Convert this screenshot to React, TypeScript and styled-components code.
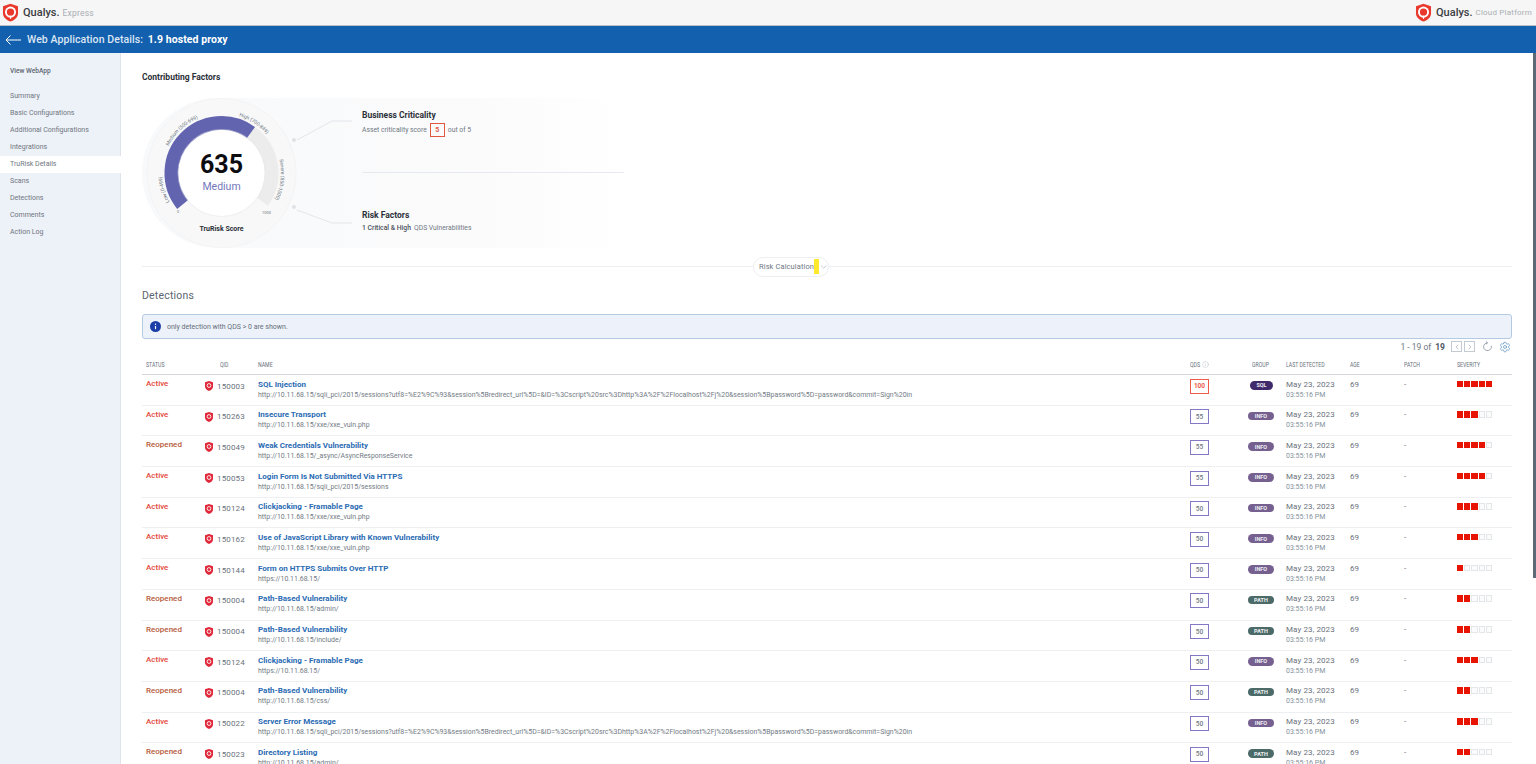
import styled, { createGlobalStyle } from "styled-components";
import { ChevronDown, ChevronLeft, ChevronRight, Info, Settings } from "lucide-react";

const LONG_URL =
  "http://10.11.68.15/sqli_pci/2015/sessions?utf8=%E2%9C%93&session%5Bredirect_url%5D=&ID=%3Cscript%20src%3Dhttp%3A%2F%2Flocalhost%2Fj%20&session%5Bpassword%5D=password&commit=Sign%20in";

type Group = "SQL" | "INFO" | "PATH";

interface Detection {
  status: "Active" | "Reopened";
  qid: number;
  name: string;
  url: string;
  qds: number;
  group: Group;
  severity: number;
}

const detections: Detection[] = [
  { status: "Active", qid: 150003, name: "SQL Injection", url: LONG_URL, qds: 100, group: "SQL", severity: 5 },
  { status: "Active", qid: 150263, name: "Insecure Transport", url: "http://10.11.68.15/xxe/xxe_vuln.php", qds: 55, group: "INFO", severity: 3 },
  { status: "Reopened", qid: 150049, name: "Weak Credentials Vulnerability", url: "http://10.11.68.15/_async/AsyncResponseService", qds: 55, group: "INFO", severity: 4 },
  { status: "Active", qid: 150053, name: "Login Form Is Not Submitted Via HTTPS", url: "http://10.11.68.15/sqli_pci/2015/sessions", qds: 55, group: "INFO", severity: 4 },
  { status: "Active", qid: 150124, name: "Clickjacking - Framable Page", url: "http://10.11.68.15/xxe/xxe_vuln.php", qds: 50, group: "INFO", severity: 3 },
  { status: "Active", qid: 150162, name: "Use of JavaScript Library with Known Vulnerability", url: "http://10.11.68.15/xxe/xxe_vuln.php", qds: 50, group: "INFO", severity: 3 },
  { status: "Active", qid: 150144, name: "Form on HTTPS Submits Over HTTP", url: "https://10.11.68.15/", qds: 50, group: "INFO", severity: 1 },
  { status: "Reopened", qid: 150004, name: "Path-Based Vulnerability", url: "http://10.11.68.15/admin/", qds: 50, group: "PATH", severity: 2 },
  { status: "Reopened", qid: 150004, name: "Path-Based Vulnerability", url: "http://10.11.68.15/include/", qds: 50, group: "PATH", severity: 2 },
  { status: "Active", qid: 150124, name: "Clickjacking - Framable Page", url: "https://10.11.68.15/", qds: 50, group: "INFO", severity: 3 },
  { status: "Reopened", qid: 150004, name: "Path-Based Vulnerability", url: "http://10.11.68.15/css/", qds: 50, group: "PATH", severity: 2 },
  { status: "Active", qid: 150022, name: "Server Error Message", url: LONG_URL, qds: 50, group: "INFO", severity: 3 },
  { status: "Reopened", qid: 150023, name: "Directory Listing", url: "http://10.11.68.15/admin/", qds: 50, group: "PATH", severity: 2 },
];

const navItems = [
  "Summary",
  "Basic Configurations",
  "Additional Configurations",
  "Integrations",
  "TruRisk Details",
  "Scans",
  "Detections",
  "Comments",
  "Action Log",
];

const headers = [
  { label: "STATUS", indent: 4 },
  { label: "QID", indent: 20 },
  { label: "NAME", indent: 0 },
  { label: "QDS", indent: 0 },
  { label: "GROUP", indent: 12 },
  { label: "LAST DETECTED", indent: 0 },
  { label: "AGE", indent: 0 },
  { label: "PATCH", indent: 0 },
  { label: "SEVERITY", indent: 0 },
];

const groupColors: Record<Group, string> = {
  SQL: "#3f2a6b",
  INFO: "#75608f",
  PATH: "#4b6a68",
};

const GlobalStyle = createGlobalStyle`
  html, body {
    margin: 0;
    height: 764px;
    overflow: hidden;
    background: #fff;
    font-family: Roboto, "Liberation Sans", sans-serif;
  }
`;

const Page = styled.div`
  position: relative;
  width: 1536px;
  height: 764px;
  overflow: hidden;
  display: flex;
  flex-direction: column;
`;

const TopBar = styled.header`
  height: 25px;
  flex: none;
  display: flex;
  align-items: center;
  justify-content: space-between;
  padding: 0 4px 0 1px;
  background: #f6f6f6;
  border-bottom: 1px solid #b9bfc5;
`;

const Brand = styled.div`
  display: flex;
  align-items: center;
  gap: 3px;
`;

const BrandName = styled.span`
  font-size: 11px;
  font-weight: 500;
  color: #3a3d42;
`;

const BrandSuffix = styled.span<{ $wide?: boolean }>`
  font-size: ${({ $wide }) => ($wide ? "8px" : "8.5px")};
  color: #a9aeb4;
  letter-spacing: 0.2px;
`;

const TitleBar = styled.div`
  height: 27px;
  flex: none;
  display: flex;
  align-items: center;
  gap: 6px;
  padding-left: 5px;
  background: #1360ae;
  color: #dbe7f4;
  font-size: 10.5px;
  font-weight: 500;
  letter-spacing: 0.08px;

  b {
    color: #fff;
    font-weight: 700;
    margin-left: 2px;
  }
`;

const Body = styled.div`
  flex: 1;
  display: flex;
  min-height: 0;
`;

const Sidebar = styled.nav`
  width: 120px;
  flex: none;
  background: #edf1f8;
  border-right: 1px solid #dfe4ec;
  padding-top: 13px;
`;

const SideTitle = styled.div`
  font-size: 6.6px;
  font-weight: 500;
  color: #5b6470;
  padding-left: 10px;
  margin-bottom: 11.5px;
  line-height: 10px;
`;

const SideItem = styled.div<{ $active?: boolean }>`
  height: 17px;
  line-height: 17px;
  padding-left: 10px;
  font-size: 7px;
  color: #707780;
  background: ${({ $active }) => ($active ? "#fff" : "transparent")};
  margin-right: ${({ $active }) => ($active ? "-1px" : "0")};
  position: relative;
`;

const Main = styled.main`
  flex: 1;
  min-width: 0;
  padding: 18px 24px 0 21px;
`;

const SectionTitle = styled.h2`
  margin: 0 0 15px;
  font-size: 8.5px;
  line-height: 12px;
  font-weight: 700;
  color: #2b3038;
`;

const FactorPanel = styled.section`
  display: flex;
  width: 482px;
  height: 150px;
  border-radius: 75px 0 0 75px;
  background: linear-gradient(90deg, #f8f9fa 0%, #fbfbfc 70%, #ffffff 100%);
`;

const Gauge = styled.svg`
  width: 220px;
  height: 150px;
  flex: none;
`;

const FactorColumn = styled.div`
  flex: 1;
  display: flex;
  flex-direction: column;
  padding-top: 12px;
`;

const FactorBlock = styled.div`
  height: 62px;
`;

const FactorDivider = styled.div`
  height: 1px;
  background: #e6e9ed;
  margin-bottom: 37px;
`;

const FactorTitle = styled.div`
  font-size: 8.5px;
  line-height: 10px;
  font-weight: 700;
  color: #2b3038;
  margin-bottom: 3px;
`;

const FactorText = styled.div`
  display: flex;
  align-items: center;
  gap: 2px;
  font-size: 6.8px;
  line-height: 11px;
  color: #6f7883;

  b {
    font-weight: 500;
    color: #4a515b;
    margin-right: 1px;
  }
`;

const ScoreBox = styled.span`
  display: inline-flex;
  align-items: center;
  justify-content: center;
  width: 15px;
  height: 14px;
  box-sizing: border-box;
  border: 1px solid #e3563f;
  font-size: 7px;
  font-weight: 700;
  color: #e3563f;
  margin: 0 1px;
`;

const CalcRow = styled.div`
  display: flex;
  align-items: center;
  margin-top: 8.5px;
  height: 20px;

  &::before,
  &::after {
    content: "";
    height: 1px;
    background: #eceef1;
  }

  &::before {
    flex: 611;
  }

  &::after {
    flex: 683;
  }
`;

const CalcPill = styled.div`
  display: flex;
  align-items: center;
  box-sizing: border-box;
  width: 76px;
  height: 20px;
  padding-left: 5px;
  border: 1px solid #eceef1;
  border-radius: 10px;
  font-size: 7.5px;
  color: #6f7883;
  letter-spacing: 0.1px;
  white-space: nowrap;

  mark {
    display: inline-block;
    flex: none;
    width: 4.5px;
    height: 15px;
    background: #ffe92e;
  }
`;

const DetectionsTitle = styled.h2`
  margin: 12.5px 0 11px;
  font-size: 10.5px;
  line-height: 14px;
  font-weight: 400;
  color: #5d6570;
  letter-spacing: 0.2px;
`;

const Notice = styled.div`
  height: 23px;
  display: flex;
  align-items: center;
  gap: 6px;
  padding-left: 7px;
  background: #edf2fa;
  border: 1px solid #b4c9e2;
  border-radius: 3px;
  font-size: 7px;
  color: #666e79;
`;

const Pager = styled.div`
  display: flex;
  align-items: center;
  justify-content: flex-end;
  gap: 1px;
  height: 15px;
  padding-right: 1px;
  font-size: 8.5px;
  color: #6f7883;

  b {
    font-weight: 700;
    margin-left: 3px;
    margin-right: 5px;
    color: #4f5862;
  }
`;

const PagerButton = styled.span`
  width: 9px;
  height: 9px;
  border: 1px solid #c3cad2;
  display: flex;
  align-items: center;
  justify-content: center;
  color: #a7afb8;
  margin-right: 1px;
`;

const PagerIcon = styled.span`
  display: flex;
  margin-left: 5px;
  color: #4f8ac0;
`;

const columns = "58px 58px 932px 50px 46px 64px 54px 53px 55px";

const HeaderRow = styled.div`
  display: grid;
  grid-template-columns: ${columns};
  height: 20px;
  align-items: center;
  border-bottom: 1px solid #d3d7dc;
`;

const HeaderCell = styled.div<{ $indent: number }>`
  display: flex;
  align-items: center;
  padding-left: ${({ $indent }) => $indent}px;
  font-size: 7.5px;
  color: #68707b;
  white-space: nowrap;

  span {
    display: inline-block;
    transform: scaleX(0.69);
    transform-origin: left center;
  }

  svg {
    margin-left: -3px;
  }
`;

const Row = styled.div`
  display: grid;
  grid-template-columns: ${columns};
  height: 30.7px;
  box-sizing: border-box;
  border-bottom: 1px solid #edeff1;
`;

const Status = styled.div<{ $reopened: boolean }>`
  padding: 3px 0 0 4px;
  font-size: 8px;
  line-height: 11px;
  font-weight: 500;
  color: ${({ $reopened }) => ($reopened ? "#b65a3a" : "#e4473a")};
`;

const QidCell = styled.div`
  display: flex;
  align-items: flex-start;
  gap: 4px;
  padding: 5.5px 0 0 5px;
  font-size: 8px;
  line-height: 11px;
  color: #6a727c;
  letter-spacing: 0.15px;

  svg {
    margin-top: 0.5px;
  }
`;

const NameCell = styled.div`
  padding-top: 3.5px;
  white-space: nowrap;
`;

const DetectionName = styled.div`
  font-size: 8px;
  line-height: 11px;
  font-weight: 700;
  color: #2b6bb3;
`;

const DetectionUrl = styled.div`
  font-size: 6.94px;
  line-height: 11px;
  color: #727a84;
`;

const QdsCell = styled.div`
  padding-top: 3.5px;
`;

const QdsBox = styled.div<{ $critical: boolean }>`
  width: 19px;
  height: 15px;
  box-sizing: border-box;
  display: flex;
  align-items: center;
  justify-content: center;
  border: 1px solid ${({ $critical }) => ($critical ? "#ee5a4a" : "#8478c4")};
  font-size: 6.5px;
  font-weight: ${({ $critical }) => ($critical ? 700 : 500)};
  color: ${({ $critical }) => ($critical ? "#ee5a4a" : "#6f7883")};
`;

const GroupCell = styled.div`
  padding: 6px 0 0 8px;
`;

const GroupBadge = styled.span<{ $group: Group }>`
  display: flex;
  align-items: center;
  justify-content: center;
  width: ${({ $group }) => ($group === "SQL" ? "23px" : "26px")};
  margin-left: ${({ $group }) => ($group === "SQL" ? "2px" : "0")};
  height: 8.5px;
  border-radius: 5px;
  background: ${({ $group }) => groupColors[$group]};
  color: #eef0f3;
  font-size: 5.5px;
  font-weight: 700;
`;

const DateCell = styled.div`
  padding-top: 3.5px;
  font-size: 8px;
  line-height: 11px;
  color: #6a727c;
  letter-spacing: 0.1px;
  white-space: nowrap;

  small {
    display: block;
    font-size: 7px;
    color: #84919c;
    letter-spacing: 0;
  }
`;

const PlainCell = styled.div`
  padding-top: 3.5px;
  font-size: 8px;
  line-height: 11px;
  color: #6a727c;
`;

const Severity = styled.div`
  display: flex;
  gap: 1px;
  padding-top: 5.5px;
`;

const SeverityBlock = styled.span<{ $on: boolean }>`
  width: 6.2px;
  height: 6.5px;
  box-sizing: border-box;
  background: ${({ $on }) => ($on ? "#e81402" : "#fafbfb")};
  border: 0.5px solid ${({ $on }) => ($on ? "#e81402" : "#e4e7ea")};
`;

const ScrollThumb = styled.div`
  position: absolute;
  top: 53px;
  right: 0;
  width: 3px;
  height: 525px;
  background: #5d6b78;
`;

const QualysMark = () => (
  <svg width="19" height="19" viewBox="0 0 24 24">
    <path d="M12 1 21.500 4v9c0 5-4 8.600-9.500 10.500C6.500 21.600 2.500 18 2.500 13V4z" fill="#e8392c" />
    <circle cx="12" cy="11.500" r="7" fill="#fff" />
    <circle cx="12" cy="11.500" r="4.600" fill="#e8392c" />
    <path d="M12 16v4" stroke="#fff" strokeWidth="1.500" />
  </svg>
);

const BackArrow = () => (
  <svg width="16" height="10" viewBox="0 0 16 10">
    <path d="M16 5H1M5.500 .5 1 5l4.500 4.500" fill="none" stroke="#fff" strokeWidth="1" />
  </svg>
);

const InfoMark = () => (
  <svg width="11" height="11" viewBox="0 0 11 11">
    <circle cx="5.500" cy="5.500" r="5.500" fill="#1b3fa6" />
    <path d="M5.500 5v3.200" stroke="#fff" strokeWidth="1.200" />
    <circle cx="5.500" cy="3.300" r=".7" fill="#fff" />
  </svg>
);

const RefreshMark = () => (
  <svg width="11" height="11" viewBox="0 0 24 24" fill="none" stroke="#7b8794" strokeWidth="1.600">
    <path d="M12 4a8.500 8.500 0 1 0 8.300 6.500" />
    <path d="M8.500 .8 12 4l-3.500 3.200" />
  </svg>
);

const ShieldIcon = () => (
  <svg width="8" height="10" viewBox="0 0 16 20">
    <path d="M8 0 16 2.500v9c0 4-3.500 6.500-8 8.500-4.500-2-8-4.500-8-8.500v-9z" fill="#e0283a" />
    <circle cx="8" cy="9" r="3.800" fill="none" stroke="#fff" strokeWidth="1.800" />
  </svg>
);

// point on the gauge circle, angle measured clockwise from 12 o'clock
const polar = (r: number, deg: number) => {
  const a = ((deg - 90) * Math.PI) / 180;
  return `${(79.5 + r * Math.cos(a)).toFixed(2)} ${(75 + r * Math.sin(a)).toFixed(2)}`;
};

const arc = (r: number, from: number, to: number) =>
  `M${polar(r, from)} A${r} ${r} 0 ${to - from > 180 ? 1 : 0} 1 ${polar(r, to)}`;

const ScoreGauge = () => (
  <Gauge viewBox="0 0 220 150">
    <circle cx="79.500" cy="75" r="74.500" fill="#f8f8f9" stroke="#f3f4f5" strokeWidth="1" />
    <path id="gaugeLow" d={arc(59.5, 241, 275)} fill="none" />
    <path id="gaugeMid" d={arc(59.5, 297, 345)} fill="none" />
    <path id="gaugeHigh" d={arc(59.5, 17, 55)} fill="none" />
    <path id="gaugeSevere" d={arc(59.5, 77, 122)} fill="none" />
    <path d={arc(50, 36, 125)} fill="none" stroke="#ececec" strokeWidth="14" />
    <path d={arc(50, 231, 396)} fill="none" stroke="#6264b0" strokeWidth="14" />
    <circle cx="79.500" cy="75" r="44" fill="#e6e7ea" fillOpacity=".5" />
    <circle cx="79.500" cy="75" r="43" fill="#fff" />
    <text x="79.500" y="75" textAnchor="middle" fontSize="25" fontWeight="700" fill="#0c0c10" fontFamily="Roboto, sans-serif">
      635
    </text>
    <text x="79.500" y="91.500" textAnchor="middle" fontSize="10.500" fill="#7477bd" fontFamily="Roboto, sans-serif">
      Medium
    </text>
    <text x="79.500" y="133" textAnchor="middle" fontSize="7" fontWeight="700" fill="#2b3038" fontFamily="Roboto, sans-serif">
      TruRisk Score
    </text>
    <text fontSize="5" fill="#6f7883" fontFamily="Roboto, sans-serif">
      <textPath href="#gaugeLow">Low (0-499)</textPath>
    </text>
    <text fontSize="5" fill="#6f7883" fontFamily="Roboto, sans-serif">
      <textPath href="#gaugeMid">Medium (500-699)</textPath>
    </text>
    <text fontSize="5" fill="#6f7883" fontFamily="Roboto, sans-serif">
      <textPath href="#gaugeHigh">High (700-849)</textPath>
    </text>
    <text fontSize="5" fill="#6f7883" fontFamily="Roboto, sans-serif">
      <textPath href="#gaugeSevere">Severe (850-1000)</textPath>
    </text>
    <text x="35" y="115" fontSize="4" fill="#6f7883" fontFamily="Roboto, sans-serif">0</text>
    <text x="120" y="115.500" fontSize="4" fill="#6f7883" fontFamily="Roboto, sans-serif">1000</text>
    <polyline points="155,42 190,23 210,23" fill="none" stroke="#e3e6ea" strokeWidth="1" />
    <polyline points="155,112 190,125 210,125" fill="none" stroke="#e3e6ea" strokeWidth="1" />
    <circle cx="152" cy="42" r="2" fill="#dfe2e5" />
    <circle cx="152" cy="109" r="2" fill="#dfe2e5" />
  </Gauge>
);

const App = () => (
  <Page>
    <GlobalStyle />
    <TopBar>
      <Brand>
        <QualysMark />
        <BrandName>Qualys.</BrandName>
        <BrandSuffix>Express</BrandSuffix>
      </Brand>
      <Brand>
        <QualysMark />
        <BrandName>Qualys.</BrandName>
        <BrandSuffix $wide>Cloud Platform</BrandSuffix>
      </Brand>
    </TopBar>
    <TitleBar>
      <BackArrow />
      <span>
        Web Application Details: <b>1.9 hosted proxy</b>
      </span>
    </TitleBar>
    <Body>
      <Sidebar>
        <SideTitle>View WebApp</SideTitle>
        {navItems.map((item) => (
          <SideItem key={item} $active={item === "TruRisk Details"}>
            {item}
          </SideItem>
        ))}
      </Sidebar>
      <Main>
        <SectionTitle>Contributing Factors</SectionTitle>
        <FactorPanel>
          <ScoreGauge />
          <FactorColumn>
            <FactorBlock>
              <FactorTitle>Business Criticality</FactorTitle>
              <FactorText>
                Asset criticality score <ScoreBox>5</ScoreBox> out of 5
              </FactorText>
            </FactorBlock>
            <FactorDivider />
            <FactorTitle>Risk Factors</FactorTitle>
            <FactorText>
              <b>1 Critical &amp; High</b> QDS Vulnerabilities
            </FactorText>
          </FactorColumn>
        </FactorPanel>
        <CalcRow>
          <CalcPill>
            Risk Calculation
            <mark />
            <ChevronDown size={10} strokeWidth={1.2} color="#8a929c" />
          </CalcPill>
        </CalcRow>
        <DetectionsTitle>Detections</DetectionsTitle>
        <Notice>
          <InfoMark />
          only detection with QDS &gt; 0 are shown.
        </Notice>
        <Pager>
          1 - 19 of <b>19</b>
          <PagerButton>
            <ChevronLeft size={8} />
          </PagerButton>
          <PagerButton>
            <ChevronRight size={8} />
          </PagerButton>
          <PagerIcon>
            <RefreshMark />
          </PagerIcon>
          <PagerIcon>
            <Settings size={12} strokeWidth={1.3} />
          </PagerIcon>
        </Pager>
        <HeaderRow>
          {headers.map((h) => (
            <HeaderCell key={h.label} $indent={h.indent}>
              <span>{h.label}</span>
              {h.label === "QDS" && <Info size={7} strokeWidth={1.5} color="#b4bbc3" />}
            </HeaderCell>
          ))}
        </HeaderRow>
        {detections.map((d, i) => (
          <Row key={`${d.qid}-${i}`}>
            <Status $reopened={d.status === "Reopened"}>{d.status}</Status>
            <QidCell>
              <ShieldIcon />
              {d.qid}
            </QidCell>
            <NameCell>
              <DetectionName>{d.name}</DetectionName>
              <DetectionUrl>{d.url}</DetectionUrl>
            </NameCell>
            <QdsCell>
              <QdsBox $critical={d.qds >= 100}>{d.qds}</QdsBox>
            </QdsCell>
            <GroupCell>
              <GroupBadge $group={d.group}>{d.group}</GroupBadge>
            </GroupCell>
            <DateCell>
              May 23, 2023
              <small>03:55:16 PM</small>
            </DateCell>
            <PlainCell>69</PlainCell>
            <PlainCell>-</PlainCell>
            <Severity>
              {[1, 2, 3, 4, 5].map((n) => (
                <SeverityBlock key={n} $on={n <= d.severity} />
              ))}
            </Severity>
          </Row>
        ))}
      </Main>
    </Body>
    <ScrollThumb />
  </Page>
);

export default App;
